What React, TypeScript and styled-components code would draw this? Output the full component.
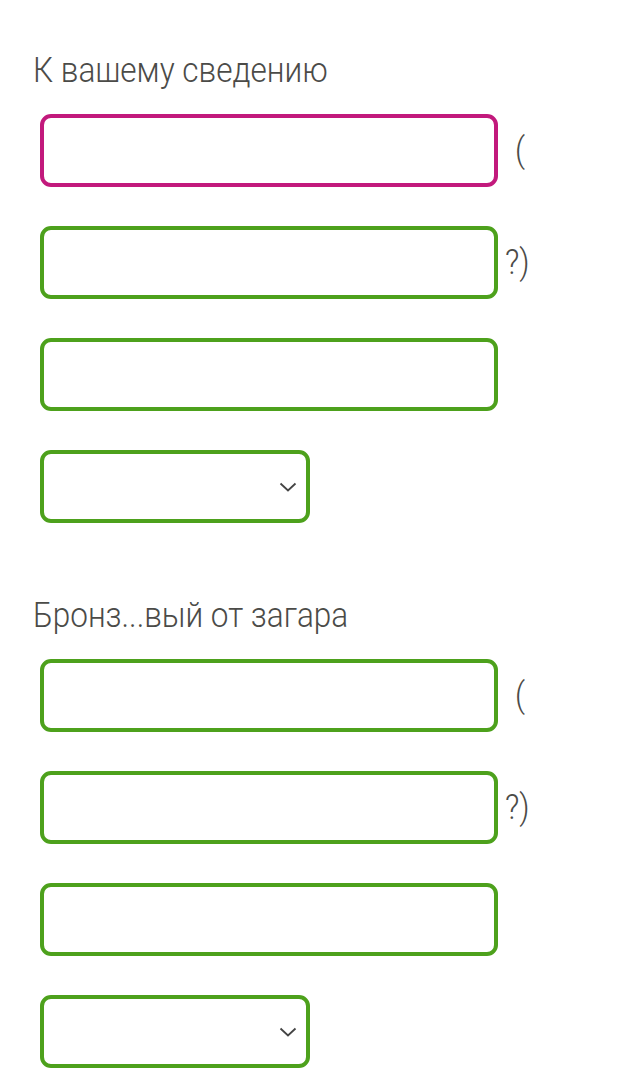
import styled, { createGlobalStyle } from "styled-components";

const GlobalStyle = createGlobalStyle`
  html, body {
    margin: 0;
    padding: 0;
    background: #ffffff;
  }
  body {
    font-family: Roboto, "Liberation Sans", sans-serif;
  }
`;

const Colors = {
  text: "#4b4b48",
  magenta: "#c2197c",
  green: "#4da11c",
};

type FieldProps = { $tone?: "magenta" | "green"; $wide?: boolean };

const Chevron = () => (
  <svg width="18" height="10" viewBox="0 0 18 10" fill="none">
    <path d="M1.5 1.5 L9 8.5 L16.5 1.5" stroke="#444" strokeWidth="1.8" />
  </svg>
);

const Group = ({
  title,
  firstTone,
}: {
  title: string;
  firstTone: "magenta" | "green";
}) => (
  <Section>
    <Heading>{title}</Heading>
    <Fields>
      <Row>
        <Field $tone={firstTone} $wide />
        <Suffix $offset={17}>(</Suffix>
      </Row>
      <Row>
        <Field $wide />
        <Suffix $offset={7}>?)</Suffix>
      </Row>
      <Row>
        <Field $wide />
      </Row>
      <Row>
        <Select>
          <Chevron />
        </Select>
      </Row>
    </Fields>
  </Section>
);

const App = () => {
  return (
    <>
      <GlobalStyle />
      <Page>
        <Group title="К вашему сведению" firstTone="magenta" />
        <Group title="Бронз...вый от загара" firstTone="green" />
      </Page>
    </>
  );
};

export default App;

const Page = styled.main`
  display: flex;
  flex-direction: column;
  gap: 73px;
  padding: 51px 0 0 33px;
`;

const Section = styled.section`
  display: flex;
  flex-direction: column;
`;

const Heading = styled.h2`
  margin: 0;
  font-size: 35px;
  line-height: 40px;
  font-weight: 300;
  color: ${Colors.text};
  transform: scaleX(0.9);
  transform-origin: left center;
`;

const Fields = styled.div`
  margin: 23px 0 0 7px;
  display: flex;
  flex-direction: column;
  gap: 39px;
`;

const Row = styled.div`
  display: flex;
  align-items: center;
`;

const Field = styled.div<FieldProps>`
  box-sizing: border-box;
  width: ${(p) => (p.$wide ? "458px" : "270px")};
  height: 73px;
  border: 4px solid ${(p) => (p.$tone === "magenta" ? Colors.magenta : Colors.green)};
  border-radius: 11px;
  background: #fff;
`;

const Select = styled(Field)`
  display: flex;
  align-items: center;
  justify-content: flex-end;
  padding-right: 9px;
`;

const Suffix = styled.span<{ $offset: number }>`
  margin-left: ${(p) => p.$offset}px;
  font-size: 35px;
  font-weight: 300;
  color: ${Colors.text};
  line-height: 40px;
  transform: scaleX(0.9);
  transform-origin: left center;
`;
